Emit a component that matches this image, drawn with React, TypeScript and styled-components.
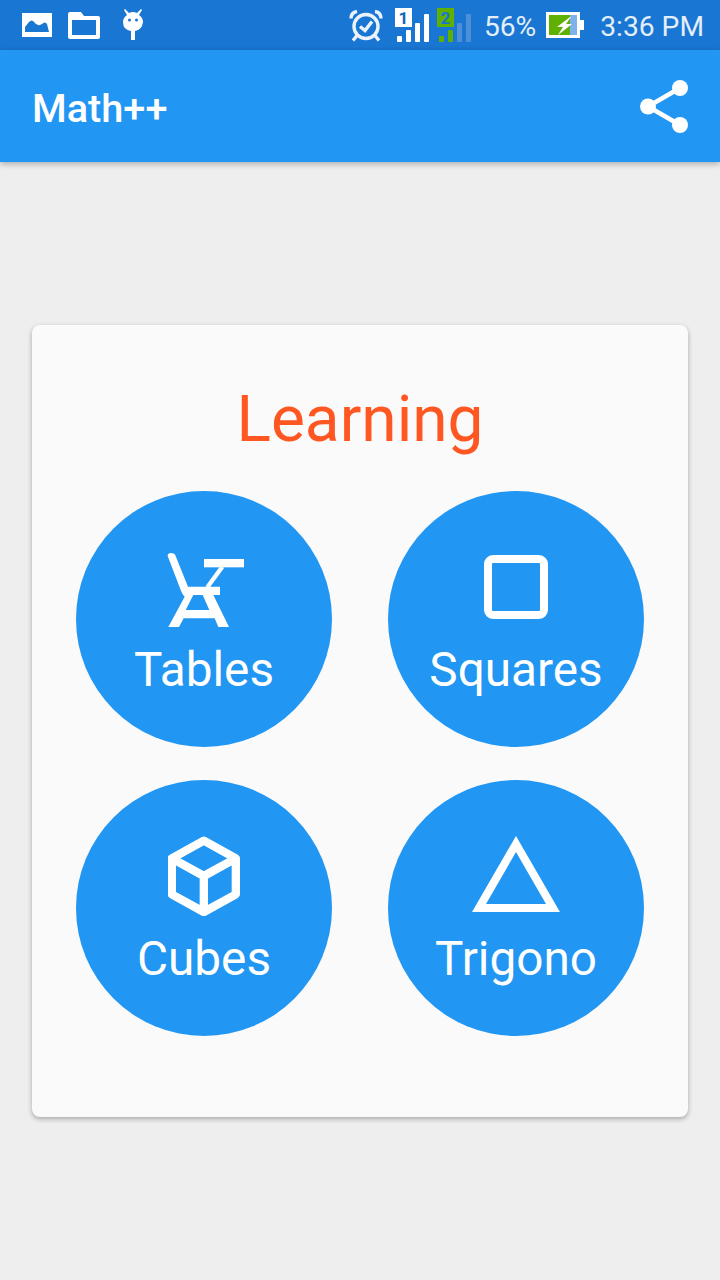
import styled, { createGlobalStyle } from "styled-components";

const GlobalStyle = createGlobalStyle`
    html, body {
        margin: 0;
        padding: 0;
        background-color: #EEEEEE;
        font-family: Roboto, "Liberation Sans", sans-serif;
    }
`;

const Screen = styled.div`
    width: 720px;
    height: 1280px;
    display: flex;
    flex-direction: column;
    overflow: hidden;
`;

const StatusBar = styled.div`
    height: 50px;
    flex-shrink: 0;
    display: flex;
    align-items: center;
    padding: 0 16px 0 22px;
    background-color: #1976D2;
    color: #E3EEF9;
`;

const StatusGroup = styled.div`
    display: flex;
    align-items: center;
    gap: 16px;
`;

const StatusRight = styled.div`
    margin-left: auto;
    display: flex;
    align-items: center;
`;

const StatusText = styled.span<{ $left: number }>`
    margin-left: ${(p) => p.$left}px;
    padding-top: 4px;
    font-size: 28.2px;
    line-height: 46px;
    white-space: nowrap;
`;

const StatusIcon = styled.svg<{ $left?: number }>`
    display: block;
    flex-shrink: 0;
    margin-left: ${(p) => p.$left ?? 0}px;
`;

const Toolbar = styled.header`
    height: 112px;
    flex-shrink: 0;
    display: flex;
    align-items: center;
    justify-content: space-between;
    padding: 0 32px;
    background-color: #2196F3;
    box-shadow: 0 2px 6px rgba(0, 0, 0, 0.28);
    position: relative;
`;

const AppTitle = styled.h1`
    margin: 5px 0 0;
    font-size: 39.7px;
    font-weight: 500;
    color: #FFFFFF;
`;

const Content = styled.main`
    flex: 1;
    display: flex;
    align-items: center;
    justify-content: center;
`;

const Card = styled.section`
    width: 656px;
    height: 792px;
    box-sizing: border-box;
    padding-top: 51px;
    background-color: #FAFAFA;
    border-radius: 8px;
    box-shadow: 0 2px 5px rgba(0, 0, 0, 0.3);
    display: flex;
    flex-direction: column;
    align-items: center;
`;

const CardTitle = styled.h2`
    margin: 0;
    height: 115px;
    font-size: 64px;
    line-height: 88px;
    font-weight: 400;
    color: #FF5722;
`;

const ButtonGrid = styled.div`
    display: grid;
    grid-template-columns: 256px 256px;
    gap: 33px 56px;
`;

const RoundButton = styled.button`
    width: 256px;
    height: 256px;
    padding: 48px 0 0;
    border: none;
    border-radius: 50%;
    background-color: #2196F3;
    color: #FFFFFF;
    display: flex;
    flex-direction: column;
    align-items: center;
    font-family: inherit;
    cursor: pointer;
`;

const IconSlot = styled.div`
    height: 96px;
    display: flex;
    align-items: center;
    justify-content: center;
`;

const ButtonLabel = styled.span`
    font-size: 47.7px;
    line-height: 60px;
    margin-top: 5px;
`;

function ChairIcon() {
    return (
        <svg width="80" height="96" viewBox="102 27 240 288">
            <g fill="#fff">
                <path d="M113 78 Q112 70 122 69 Q133 69 136 76 L174 170 L270 170 L270 195 L250 195 L297 291 L265 291 L254 265 L161 265 L147 291 L115 291 L164 200 Q156 192 152 180 Z M190 195 L167 240 L238 240 L218 195 Z" fillRule="evenodd" />
                <rect x="222" y="87" width="120" height="25" />
            </g>
            <path d="M277 110 L232 172" stroke="#fff" strokeWidth="13" fill="none" />
        </svg>
    );
}

function SquareIcon() {
    return (
        <svg width="64" height="64" viewBox="0 0 64 64">
            <rect x="4" y="4" width="56" height="56" rx="5" fill="none" stroke="#fff" strokeWidth="8" />
        </svg>
    );
}

function CubeIcon() {
    return (
        <svg width="72" height="80" viewBox="115 48 215 240">
            <path d="M222 62 L318 115 V223 L222 276 L126 223 V115 Z M126 115 L222 168 L318 115 M222 168 V276" fill="none" stroke="#fff" strokeWidth="25" strokeLinejoin="round" />
        </svg>
    );
}

function TriangleIcon() {
    return (
        <svg width="88" height="76" viewBox="0 0 88 76" style={{ marginTop: -4 }}>
            <path d="M44 0 L88 76 H0 Z M44 16 L14 68 H74 Z" fill="#fff" fillRule="evenodd" />
        </svg>
    );
}

function ShareIcon() {
    return (
        <svg width="48" height="53" viewBox="0 0 48 53">
            <path d="M8 26.5 L40 8 M8 26.5 L40 45" stroke="#fff" strokeWidth="4.5" />
            <circle cx="8" cy="26.5" r="8" fill="#fff" />
            <circle cx="40" cy="8" r="8" fill="#fff" />
            <circle cx="40" cy="45" r="8" fill="#fff" />
        </svg>
    );
}

const items = [
    { label: "Tables", icon: <ChairIcon /> },
    { label: "Squares", icon: <SquareIcon /> },
    { label: "Cubes", icon: <CubeIcon /> },
    { label: "Trigono", icon: <TriangleIcon /> },
];

export default function App() {
    return (
        <Screen>
            <GlobalStyle />
            <StatusBar>
                <StatusGroup>
                    <StatusIcon width="30" height="24" viewBox="0 0 30 24">
                        <path d="M0 0 H30 V24 H0 Z M3 19 H27 L25 11 Q23 8 20 11 L18 12 Q15 13 12 9 Q10 6 7 9 L3 14 Z" fill="#fff" fillRule="evenodd" />
                    </StatusIcon>
                    <StatusIcon width="32" height="27" viewBox="0 0 32 27">
                        <path d="M2 0 H13 L16 4 H30 Q32 4 32 6 V25 Q32 27 30 27 H2 Q0 27 0 25 V2 Q0 0 2 0 Z M4 8 V23 H28 V8 Z" fill="#fff" fillRule="evenodd" />
                    </StatusIcon>
                    <StatusIcon width="22" height="32" viewBox="0 0 22 32" $left={6}>
                        <path d="M3 0 L7 4 Q11 2 15 4 L19 0 L20 1 L17 6 Q21 9 21 13 Q20 21 13 22 V31 H9 V22 Q1 21 1 13 Q1 9 5 6 L2 1 Z" fill="#fff" />
                        <circle cx="7.5" cy="11" r="1.5" fill="#1976D2" />
                        <circle cx="14.5" cy="11" r="1.5" fill="#1976D2" />
                    </StatusIcon>
                </StatusGroup>
                <StatusRight>
                    <StatusIcon width="34" height="33" viewBox="0 0 34 32">
                        <g fill="none" stroke="#EAF3FB" strokeWidth="3.4">
                            <circle cx="17" cy="17" r="12" />
                            <path d="M2 9 Q2 3 8 2 M32 9 Q32 3 26 2 M8 26 L4 31 M26 26 L30 31" />
                            <path d="M11 17 L16 21 L23 12" />
                        </g>
                    </StatusIcon>
                    <StatusIcon width="35" height="34" viewBox="0 0 35 34" $left={12}>
                        <rect x="0" y="0" width="17" height="19" fill="#fff" />
                        <text x="8.5" y="16" textAnchor="middle" fontSize="17" fontWeight="700" fontFamily="Roboto" fill="#1565B8">1</text>
                        <rect x="2" y="28" width="5" height="6" rx="1" fill="#fff" />
                        <rect x="11" y="22" width="5" height="12" rx="1" fill="#fff" />
                        <rect x="20" y="15" width="5" height="19" rx="1" fill="#fff" />
                        <rect x="29" y="6" width="5" height="28" rx="1" fill="#fff" />
                    </StatusIcon>
                    <StatusIcon width="35" height="34" viewBox="0 0 35 34" $left={7}>
                        <rect x="0" y="0" width="17" height="19" fill="#5FB000" />
                        <text x="8.5" y="16" textAnchor="middle" fontSize="17" fontWeight="700" fontFamily="Roboto" fill="#1976D2">2</text>
                        <rect x="2" y="28" width="5" height="6" rx="1" fill="#5FB000" />
                        <rect x="11" y="22" width="5" height="12" rx="1" fill="#5FB000" />
                        <rect x="20" y="15" width="5" height="19" rx="1" fill="#4F8FD6" />
                        <rect x="29" y="6" width="5" height="28" rx="1" fill="#4F8FD6" />
                    </StatusIcon>
                    <StatusText $left={12}>56%</StatusText>
                    <StatusIcon width="38" height="26" viewBox="0 0 38 26" $left={10}>
                        <rect x="0" y="0" width="34" height="26" fill="#fff" />
                        <rect x="3" y="3" width="21" height="20" fill="#5FB000" />
                        <rect x="24" y="3" width="7" height="20" fill="#7FB2EA" />
                        <rect x="34" y="8" width="4" height="10" fill="#fff" />
                        <path d="M24 5 L11 15 H17 L12 23 L26 12 H20 L25 5 Z" fill="#fff" />
                    </StatusIcon>
                    <StatusText $left={16}>3:36 PM</StatusText>
                </StatusRight>
            </StatusBar>
            <Toolbar>
                <AppTitle>Math++</AppTitle>
                <ShareIcon />
            </Toolbar>
            <Content>
                <Card>
                    <CardTitle>Learning</CardTitle>
                    <ButtonGrid>
                        {items.map((item) => (
                            <RoundButton key={item.label}>
                                <IconSlot>{item.icon}</IconSlot>
                                <ButtonLabel>{item.label}</ButtonLabel>
                            </RoundButton>
                        ))}
                    </ButtonGrid>
                </Card>
            </Content>
        </Screen>
    );
}
